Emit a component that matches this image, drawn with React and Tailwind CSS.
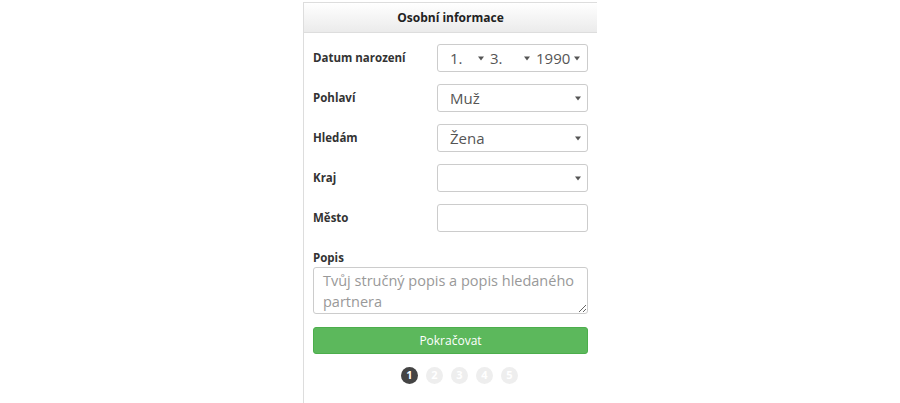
const font = { fontFamily: '"Open Sans", "Liberation Sans", sans-serif' };

function Arrow() {
  return (
    <svg width="6" height="5" viewBox="0 0 6 5" className="shrink-0">
      <path d="M0 0.5h6L3 4.5z" fill="#555" />
    </svg>
  );
}

function Row({ label, children }) {
  return (
    <div className="mb-[12px] flex h-[28px] items-center">
      <div className="w-[124px] text-[11.5px] font-bold text-[#333]">{label}</div>
      {children}
    </div>
  );
}

function Select({ value }) {
  return (
    <div className="flex h-[28px] w-[151px] items-center justify-between rounded-[3px] border border-[#ccc] bg-white pl-[12px] pr-[6px] text-[15px] text-[#555]">
      <span>{value}</span>
      <Arrow />
    </div>
  );
}

export default function App() {
  return (
    <div className="min-h-[403px] bg-white" style={font}>
      <div className="mx-auto mt-[2px] min-h-[401px] w-[294px] border-l border-t border-[#ddd]">
        <div className="flex h-[30px] items-center justify-center border-b border-[#ddd] bg-gradient-to-b from-white to-[#ebebeb] text-[12px] font-bold text-[#222]">
          Osobní informace
        </div>
        <div className="px-[9px] pt-[11px]">
          <Row label="Datum narození">
            <div className="flex h-[28px] w-[151px] items-center rounded-[3px] border border-[#ccc] bg-white pl-[12px] text-[15px] text-[#555]">
              <span className="w-[28px]">1.</span>
              <Arrow />
              <span className="ml-[6px] w-[34px]">3.</span>
              <Arrow />
              <span className="ml-[6px] w-[38px]">1990</span>
              <Arrow />
            </div>
          </Row>
          <Row label="Pohlaví">
            <Select value="Muž" />
          </Row>
          <Row label="Hledám">
            <Select value="Žena" />
          </Row>
          <Row label="Kraj">
            <Select value="" />
          </Row>
          <Row label="Město">
            <div className="h-[28px] w-[151px] rounded-[3px] border border-[#ccc] bg-white" />
          </Row>
          <div className="pt-[5px] text-[11.5px] font-bold leading-[17px] text-[#333]">Popis</div>
          <textarea
            className="mt-[1px] block h-[47px] w-full resize-y overflow-hidden rounded-[3px] border border-[#ccc] px-[9px] py-[2px] text-[14.5px] leading-[21px] text-[#555] placeholder:text-[#999] outline-none"
            style={font}
            placeholder="Tvůj stručný popis a popis hledaného partnera"
          />
          <button
            className="mt-[13px] flex h-[27px] w-full items-center justify-center rounded-[3px] border border-[#4cae4c] bg-[#5cb85c] text-[12px] text-white"
            style={font}
          >
            Pokračovat
          </button>
          <div className="mt-[13px] flex justify-center gap-[8px] pl-[18px]">
            {[1, 2, 3, 4, 5].map((n) => (
              <div
                key={n}
                className={
                  n === 1
                    ? 'flex h-[17px] w-[17px] items-center justify-center rounded-full bg-[#444] text-[11px] font-bold text-white'
                    : 'flex h-[17px] w-[17px] items-center justify-center rounded-full bg-[#eee] text-[11px] font-bold text-white'
                }
              >
                {n}
              </div>
            ))}
          </div>
        </div>
      </div>
    </div>
  );
}
